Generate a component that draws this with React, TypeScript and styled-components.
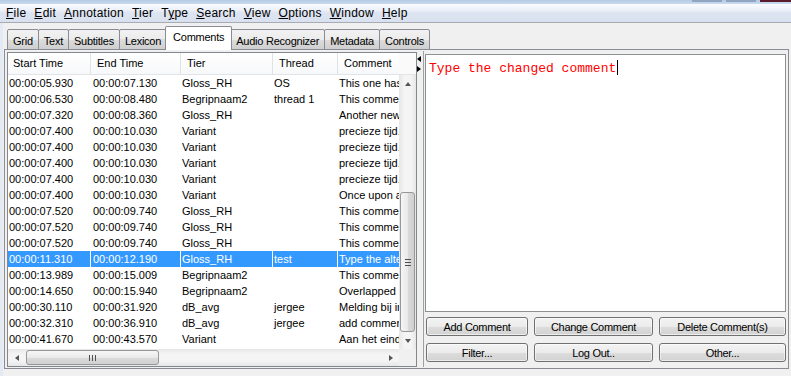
import styled, { createGlobalStyle } from "styled-components";

const GlobalStyle = createGlobalStyle`
  html, body {
    margin: 0;
    padding: 0;
    background: #f0f0f0;
  }
  body {
    font-family: "Liberation Sans", Arial, sans-serif;
    overflow: hidden;
  }
  * {
    box-sizing: border-box;
  }
`;

const Window = styled.div`
  width: 791px;
  height: 376px;
  display: flex;
  flex-direction: column;
  overflow: hidden;
  background: #f0f0f0;
`;

const TitleStrip = styled.div`
  height: 4px;
  display: flex;
  justify-content: flex-end;
  align-items: flex-start;
  background: linear-gradient(#b4cbe5, #c9daee);
`;

const CaptionButton = styled.div<{ $close?: boolean }>`
  width: ${(p) => (p.$close ? 31 : 30)}px;
  height: 2px;
  margin-left: 4px;
  background: ${(p) => (p.$close ? "#5c1b2b" : "#8fa5c1")};
`;

const MenuBar = styled.div`
  height: 19px;
  display: flex;
  align-items: center;
  padding-left: 2px;
  font-size: 12px;
  letter-spacing: 0.25px;
  color: #000;
  background: linear-gradient(
    to bottom,
    #f9fbfe 0%,
    #eef2f9 30%,
    #dde4f1 50%,
    #d9e1f0 100%
  );
  border-bottom: 1px solid #a7abb2;
`;

const MenuItem = styled.span`
  padding: 0 4px;
  white-space: nowrap;
`;

const Key = styled.span`
  text-decoration: underline;
  text-underline-offset: 1px;
`;

const Body = styled.div`
  flex: 1;
  display: flex;
  flex-direction: column;
  padding: 4px 0 0 1px;
  border-left: 3px solid #e3eaf3;
`;

const TabStrip = styled.div`
  height: 23px;
  display: flex;
  align-items: flex-end;
  padding-left: 3px;
  margin-bottom: -1px;
  position: relative;
  z-index: 1;
`;

const Tab = styled.div<{ $active?: boolean }>`
  height: ${(p) => (p.$active ? 24 : 21)}px;
  padding: ${(p) => (p.$active ? "3px 7px 0" : "4px 5px 0")};
  margin: ${(p) => (p.$active ? "0 -1px 0 -2px" : "0 0 0 -1px")};
  border: 1px solid #898c95;
  border-bottom: ${(p) => (p.$active ? "none" : "1px solid #898c95")};
  border-radius: 2px 2px 0 0;
  background: ${(p) =>
    p.$active
      ? "#ffffff"
      : "linear-gradient(#f2f2f2 0%, #ebebeb 50%, #dddddd 50%, #cfcfcf 100%)"};
  font-size: 11px;
  letter-spacing: -0.25px;
  line-height: 14px;
  white-space: nowrap;
  position: relative;
  z-index: ${(p) => (p.$active ? 2 : 0)};
  &:first-child {
    margin-left: 0;
  }
`;

const TabPanel = styled.div`
  width: 785px;
  height: 320px;
  display: flex;
  padding: 1px;
  border: 1px solid #898c95;
  background: #f0f0f0;
`;

const TablePane = styled.div`
  width: 410px;
  height: 315px;
  margin: 1px 0 0 1px;
  border: 1px solid #828790;
  background: #ffffff;
  display: grid;
  grid-template-columns: 391px 17px;
  grid-template-rows: 22px 274px 17px;
  font-size: 11px;
  color: #000;
`;

const COLUMNS = "83px 90px 92px 65px 61px";

const HeaderRow = styled.div`
  display: grid;
  grid-template-columns: ${COLUMNS};
  background: linear-gradient(#ffffff, #f7f8fa);
  border-bottom: 1px solid #e2e4e8;
`;

const HeaderCell = styled.div`
  padding: 4px 0 0 6px;
  border-right: 1px solid #dfe3e8;
  white-space: nowrap;
  overflow: hidden;
  &:first-child {
    padding-left: 5px;
  }
  &:last-child {
    border-right: none;
  }
`;

const HeaderCorner = styled.div`
  background: #fafafa;
  border-bottom: 1px solid #e2e4e8;
`;

const Rows = styled.div`
  display: flex;
  flex-direction: column;
  overflow: hidden;
`;

const Row = styled.div<{ $selected?: boolean }>`
  height: 16px;
  flex: none;
  display: grid;
  grid-template-columns: ${COLUMNS};
  background: ${(p) => (p.$selected ? "#3399ff" : "transparent")};
  color: ${(p) => (p.$selected ? "#ffffff" : "#000000")};
`;

const Cell = styled.div<{ $selected?: boolean }>`
  padding: 1px 0 0 1px;
  line-height: 14px;
  white-space: nowrap;
  overflow: hidden;
  border-right: 1px solid
    ${(p) => (p.$selected ? "#ffffff" : "transparent")};
  &:nth-child(2) {
    padding-left: 2px;
  }
  &:last-child {
    border-right: none;
  }
`;

const VScroll = styled.div`
  display: flex;
  flex-direction: column;
  background: linear-gradient(to right, #e6e6e6, #f4f4f4 30%, #f4f4f4 70%, #e6e6e6);
`;

const HScroll = styled.div`
  display: flex;
  align-items: stretch;
  background: linear-gradient(#e6e6e6, #f4f4f4 30%, #f4f4f4 70%, #e6e6e6);
`;

const ScrollButton = styled.div`
  width: 17px;
  height: 17px;
  flex: none;
  display: flex;
  align-items: center;
  justify-content: center;
`;

const Arrow = styled.div<{ $dir: "up" | "down" | "left" | "right"; $color?: string }>`
  width: 0;
  height: 0;
  border-style: solid;
  ${(p) => {
    const c = p.$color || "#555555";
    switch (p.$dir) {
      case "up":
        return `border-width: 0 3.5px 4px 3.5px; border-color: transparent transparent ${c} transparent;`;
      case "down":
        return `border-width: 4px 3.5px 0 3.5px; border-color: ${c} transparent transparent transparent;`;
      case "left":
        return `border-width: 3.5px 4px 3.5px 0; border-color: transparent ${c} transparent transparent;`;
      default:
        return `border-width: 3.5px 0 3.5px 4px; border-color: transparent transparent transparent ${c};`;
    }
  }}
`;

const VTrack = styled.div`
  flex: 1;
  display: flex;
  flex-direction: column;
  justify-content: flex-end;
  padding: 0 1px;
`;

const HTrack = styled.div`
  flex: 1;
  display: flex;
  align-items: stretch;
  padding: 1px 0 1px 1px;
`;

const Thumb = styled.div<{ $horizontal?: boolean }>`
  ${(p) => (p.$horizontal ? "width: 133px;" : "height: 140px;")}
  border: 1px solid #979797;
  border-radius: 3px;
  display: flex;
  align-items: center;
  justify-content: center;
  gap: 2px;
  flex-direction: ${(p) => (p.$horizontal ? "row" : "column")};
  background: ${(p) =>
    p.$horizontal
      ? "linear-gradient(#f6f6f6, #e9e9e9 50%, #dbdbdb 51%, #d0d0d0)"
      : "linear-gradient(to right, #f6f6f6, #e9e9e9 50%, #dbdbdb 51%, #d0d0d0)"};
`;

const Grip = styled.div<{ $horizontal?: boolean }>`
  ${(p) => (p.$horizontal ? "width: 1px; height: 6px;" : "width: 6px; height: 1px;")}
  background: #505050;
`;

const ScrollCorner = styled.div`
  background: #f0f0f0;
`;

const Splitter = styled.div`
  width: 7px;
  display: flex;
  flex-direction: column;
  align-items: center;
  gap: 4px;
  padding: 5px 2px 0 0;
`;

const RightPane = styled.div`
  flex: 1;
  display: flex;
  flex-direction: column;
  padding: 3px 1px 0 1px;
  border-left: 1px solid #a0a0a0;
`;

const CommentBox = styled.div`
  height: 258px;
  flex: none;
  border: 1px solid #8e8f8f;
  background: #ffffff;
  padding: 5px 3px;
  font-family: "Liberation Mono", "Courier New", monospace;
  font-size: 13px;
  line-height: 15px;
  color: #ff0000;
`;

const Caret = styled.span`
  display: inline-block;
  width: 1px;
  height: 15px;
  margin-left: 1px;
  vertical-align: -3px;
  background: #000;
`;

const ButtonGrid = styled.div`
  display: grid;
  grid-template-columns: 102px 119px 127px;
  grid-auto-rows: 19px;
  column-gap: 6px;
  row-gap: 7px;
  margin: 5px 0 0 1px;
`;

const Button = styled.button`
  margin: 0;
  padding: 0;
  border: 1px solid #707070;
  border-radius: 3px;
  background: linear-gradient(#f3f3f3 0%, #ebebeb 50%, #dddddd 51%, #d2d2d2 100%);
  box-shadow: inset 0 0 0 1px rgba(255, 255, 255, 0.6);
  font-family: "Liberation Sans", Arial, sans-serif;
  font-size: 11px;
  letter-spacing: -0.3px;
  color: #000;
  cursor: pointer;
`;

const menus: Array<[string, string, string]> = [
  ["", "F", "ile"],
  ["", "E", "dit"],
  ["", "A", "nnotation"],
  ["", "T", "ier"],
  ["T", "y", "pe"],
  ["", "S", "earch"],
  ["", "V", "iew"],
  ["", "O", "ptions"],
  ["", "W", "indow"],
  ["", "H", "elp"],
];

const tabs = [
  "Grid",
  "Text",
  "Subtitles",
  "Lexicon",
  "Comments",
  "Audio Recognizer",
  "Metadata",
  "Controls",
];

const headers = ["Start Time", "End Time", "Tier", "Thread", "Comment"];

const rows: string[][] = [
  ["00:00:05.930", "00:00:07.130", "Gloss_RH", "OS", "This one has a thread"],
  ["00:00:06.530", "00:00:08.480", "Begripnaam2", "thread 1", "This comment is new"],
  ["00:00:07.320", "00:00:08.360", "Gloss_RH", "", "Another new comment"],
  ["00:00:07.400", "00:00:10.030", "Variant", "", "precieze tijd..."],
  ["00:00:07.400", "00:00:10.030", "Variant", "", "precieze tijd..."],
  ["00:00:07.400", "00:00:10.030", "Variant", "", "precieze tijd..."],
  ["00:00:07.400", "00:00:10.030", "Variant", "", "precieze tijd..."],
  ["00:00:07.400", "00:00:10.030", "Variant", "", "Once upon a time"],
  ["00:00:07.520", "00:00:09.740", "Gloss_RH", "", "This comment"],
  ["00:00:07.520", "00:00:09.740", "Gloss_RH", "", "This comment"],
  ["00:00:07.520", "00:00:09.740", "Gloss_RH", "", "This comment"],
  ["00:00:11.310", "00:00:12.190", "Gloss_RH", "test", "Type the alternative"],
  ["00:00:13.989", "00:00:15.009", "Begripnaam2", "", "This comment"],
  ["00:00:14.650", "00:00:15.940", "Begripnaam2", "", "Overlapped annotation"],
  ["00:00:30.110", "00:00:31.920", "dB_avg", "jergee", "Melding bij invoer"],
  ["00:00:32.310", "00:00:36.910", "dB_avg", "jergee", "add comment"],
  ["00:00:41.670", "00:00:43.570", "Variant", "", "Aan het einde"],
];

const SELECTED = 11;

const buttons = [
  "Add Comment",
  "Change Comment",
  "Delete Comment(s)",
  "Filter...",
  "Log Out..",
  "Other...",
];

export default function App() {
  return (
    <>
      <GlobalStyle />
      <Window>
        <TitleStrip>
          <CaptionButton />
          <CaptionButton />
          <CaptionButton $close />
        </TitleStrip>
        <MenuBar>
          {menus.map(([pre, key, rest]) => (
            <MenuItem key={pre + key + rest}>
              {pre}
              <Key>{key}</Key>
              {rest}
            </MenuItem>
          ))}
        </MenuBar>
        <Body>
          <TabStrip>
            {tabs.map((t) => (
              <Tab key={t} $active={t === "Comments"}>
                {t}
              </Tab>
            ))}
          </TabStrip>
          <TabPanel>
            <TablePane>
              <HeaderRow>
                {headers.map((h) => (
                  <HeaderCell key={h}>{h}</HeaderCell>
                ))}
              </HeaderRow>
              <HeaderCorner />
              <Rows>
                {rows.map((r, i) => (
                  <Row key={i} $selected={i === SELECTED}>
                    {r.map((c, j) => (
                      <Cell key={j} $selected={i === SELECTED}>
                        {c}
                      </Cell>
                    ))}
                  </Row>
                ))}
              </Rows>
              <VScroll>
                <ScrollButton>
                  <Arrow $dir="up" />
                </ScrollButton>
                <VTrack>
                  <Thumb>
                    <Grip />
                    <Grip />
                    <Grip />
                  </Thumb>
                </VTrack>
                <ScrollButton>
                  <Arrow $dir="down" />
                </ScrollButton>
              </VScroll>
              <HScroll>
                <ScrollButton>
                  <Arrow $dir="left" />
                </ScrollButton>
                <HTrack>
                  <Thumb $horizontal>
                    <Grip $horizontal />
                    <Grip $horizontal />
                    <Grip $horizontal />
                  </Thumb>
                </HTrack>
                <ScrollButton>
                  <Arrow $dir="right" />
                </ScrollButton>
              </HScroll>
              <ScrollCorner />
            </TablePane>
            <Splitter>
              <Arrow $dir="left" $color="#000" />
              <Arrow $dir="right" $color="#000" />
            </Splitter>
            <RightPane>
              <CommentBox>
                Type the changed comment
                <Caret />
              </CommentBox>
              <ButtonGrid>
                {buttons.map((b) => (
                  <Button key={b}>{b}</Button>
                ))}
              </ButtonGrid>
            </RightPane>
          </TabPanel>
        </Body>
      </Window>
    </>
  );
}
